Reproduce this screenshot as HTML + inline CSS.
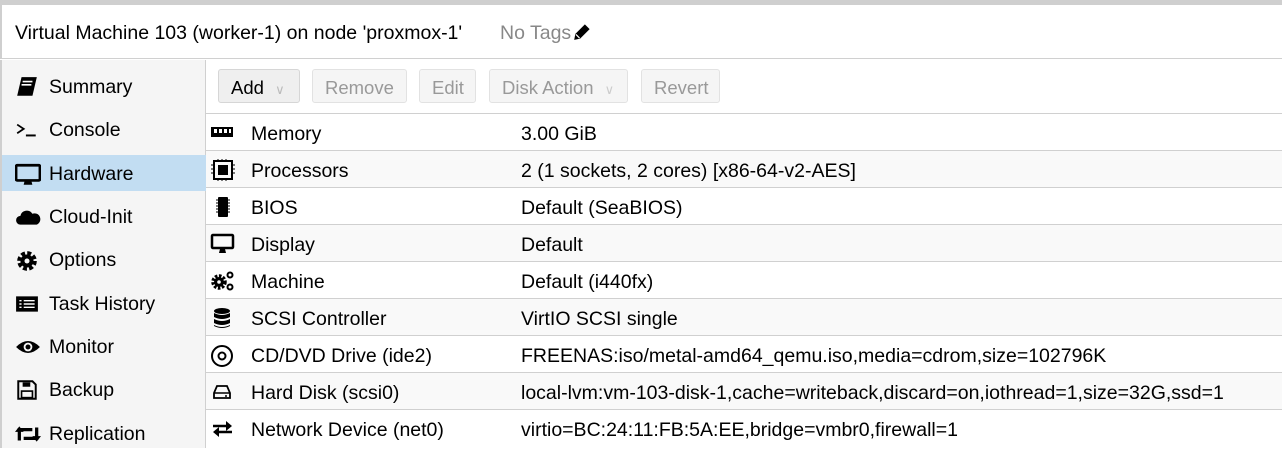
<!DOCTYPE html><html><head><style>
*{margin:0;padding:0;box-sizing:border-box}
body{width:1282px;height:448px;overflow:hidden;font-family:"Liberation Sans",sans-serif;background:#fff;position:relative;color:#000}
.top{position:absolute;left:0;top:0;width:1282px;height:5px;background:#cfcfcf}
.hdr{position:absolute;left:0;top:5px;width:1282px;height:54px;border-bottom:1px solid #d0d0d0;border-left:2px solid #cfcfcf}
.hdr .t{position:absolute;left:13px;top:17px;font-size:19.5px}
.hdr .g{position:absolute;left:498px;top:17px;font-size:19.5px;color:#888}
.side{position:absolute;left:0;top:60px;width:206px;height:388px;background:#f5f5f5;border-right:1px solid #d0d0d0;border-left:2px solid #cfcfcf}
.si{position:absolute;left:0;width:204px;height:36px;font-size:19.5px}
.si span{position:absolute;left:47px;top:8px}
.si svg{position:absolute;left:13px;top:8px}
.sel{background:#c2ddf2}
.btn{position:absolute;top:69px;height:34px;border:1px solid #e2e2e2;border-radius:3px;background:#f5f5f5;font-size:18.5px;color:#999;padding:7px 0 0 12px}
.btn.a{background:#efefef;border-color:#d6d6d6;color:#000}
.tb{position:absolute;left:206px;top:113px;width:1076px;border-top:1px solid #d0d0d0}
.row{position:relative;height:37px;border-bottom:1px solid #d0d0d0;font-size:19.5px}
.row.g{background:#f9f9f9}
.row .n{position:absolute;left:45px;top:9px}
.row .v{position:absolute;left:315px;top:9px}
.row svg{position:absolute;left:4px;top:8px}
</style></head><body>
<div class="top"></div>
<div class="hdr"><div class="t">Virtual Machine 103 (worker-1) on node 'proxmox-1'</div><div class="g">No Tags <svg width="19" height="19" viewBox="0 0 16 16" style="vertical-align:-2px;margin-left:-4px"><path d="M1 15l1-5 8-8 4 4-8 8z" fill="#000"/><path d="M2.5 10.5l3 3" stroke="#fff" stroke-width="1"/></svg></div></div>
<div class="side">
<div class="si" style="top:8px"><svg width="24" height="22" viewBox="0 0 22 20"><path d="M6 1h14l-4 17H2z" fill="#000"/><path d="M7 5h9M6 8h9" stroke="#fff" stroke-width="1.5"/></svg><span>Summary</span></div>
<div class="si" style="top:51px"><svg width="24" height="22" viewBox="0 0 22 20"><path d="M2 5l6 4-6 4" stroke="#000" stroke-width="1.6" fill="none"/><path d="M10 15h9" stroke="#000" stroke-width="1.8"/></svg><span>Console</span></div>
<div class="si sel" style="top:95px"><svg width="26" height="24" viewBox="0 0 24 22"><rect x="1" y="2" width="22" height="14" rx="1" fill="none" stroke="#000" stroke-width="2.5"/><path d="M8 20h8l-1-4H9z" fill="#000"/></svg><span>Hardware</span></div>
<div class="si" style="top:138px"><svg width="26" height="22" viewBox="0 0 24 20"><path d="M5 17a4 4 0 010-8 6 6 0 0111-2 5 5 0 014 10z" fill="#000"/></svg><span>Cloud-Init</span></div>
<div class="si" style="top:181px"><svg width="24" height="24" viewBox="0 0 22 22"><circle cx="11" cy="11" r="7" fill="none" stroke="#000" stroke-width="4" stroke-dasharray="3.5 2"/><circle cx="11" cy="11" r="6" fill="#000"/><circle cx="11" cy="11" r="2.3" fill="#f5f5f5"/></svg><span>Options</span></div>
<div class="si" style="top:225px"><svg width="24" height="22" viewBox="0 0 22 20"><rect x="1" y="3" width="20" height="14" fill="#000"/><path d="M4 7h2M8 7h10M4 10h2M8 10h10M4 13h2M8 13h10" stroke="#fff" stroke-width="1.3"/></svg><span>Task History</span></div>
<div class="si" style="top:268px"><svg width="26" height="22" viewBox="0 0 24 20"><path d="M1 10q11-11 22 0q-11 11-22 0z" fill="#000"/><circle cx="12" cy="10" r="4" fill="#f5f5f5"/><circle cx="12" cy="10" r="2.3" fill="#000"/></svg><span>Monitor</span></div>
<div class="si" style="top:311px"><svg width="24" height="22" viewBox="0 0 22 20"><path d="M3 2h13l3 3v13H3z" fill="none" stroke="#000" stroke-width="1.8"/><rect x="7" y="3" width="7" height="4" fill="#000"/><rect x="6" y="11" width="10" height="6" fill="none" stroke="#000" stroke-width="1.5"/></svg><span>Backup</span></div>
<div class="si" style="top:355px"><svg width="26" height="22" viewBox="0 0 24 20"><path d="M4 16V6h12" stroke="#000" stroke-width="3" fill="none"/><path d="M0 8l4-5 4 5z" fill="#000"/><path d="M20 4v10H8" stroke="#000" stroke-width="3" fill="none"/><path d="M16 12l4 5 4-5z" fill="#000"/></svg><span>Replication</span></div>
</div>
<div class="btn a" style="left:218px;width:82px">Add <span style="color:#bbb;font-size:13px;margin-left:6px">&#8744;</span></div>
<div class="btn" style="left:312px;width:95px">Remove</div>
<div class="btn" style="left:419px;width:57px">Edit</div>
<div class="btn" style="left:489px;width:139px">Disk Action <span style="color:#ccc;font-size:13px;margin-left:6px">&#8744;</span></div>
<div class="btn" style="left:641px;width:79px">Revert</div>
<div class="tb">
<div class="row"><svg width="26" height="20" viewBox="0 0 26 20"><rect x="1" y="5" width="22" height="10" fill="#000"/><rect x="4" y="7" width="3" height="4" fill="#fff"/><rect x="9" y="7" width="3" height="4" fill="#fff"/><rect x="14" y="7" width="3" height="4" fill="#fff"/><rect x="19" y="7" width="2" height="4" fill="#fff"/></svg><span class="n">Memory</span><span class="v">3.00 GiB</span></div>
<div class="row g"><svg width="26" height="22" viewBox="0 0 26 22"><rect x="4" y="2" width="18" height="18" fill="none" stroke="#000" stroke-width="2"/><rect x="8" y="6" width="10" height="10" fill="#000"/><path d="M1 6h3M1 10h3M1 14h3M22 6h3M22 10h3M22 14h3M8 0v2M12 0v2M16 0v2M8 20v2M12 20v2M16 20v2" stroke="#000"/></svg><span class="n">Processors</span><span class="v">2 (1 sockets, 2 cores) [x86-64-v2-AES]</span></div>
<div class="row"><svg width="26" height="22" viewBox="0 0 26 22"><rect x="8" y="1" width="10" height="20" rx="1" fill="#000"/><path d="M6 4h14M6 7h14M6 10h14M6 13h14M6 16h14" stroke="#000" stroke-dasharray="2 10"/></svg><span class="n">BIOS</span><span class="v">Default (SeaBIOS)</span></div>
<div class="row g"><svg width="26" height="22" viewBox="0 0 26 22"><rect x="2" y="2" width="21" height="13" rx="1" fill="none" stroke="#000" stroke-width="2.5"/><path d="M9 20h7l-1-4h-5z" fill="#000"/></svg><span class="n">Display</span><span class="v">Default</span></div>
<div class="row"><svg width="26" height="22" viewBox="0 0 26 22"><circle cx="9" cy="12" r="6" fill="none" stroke="#000" stroke-width="3.5" stroke-dasharray="2.5 1.5"/><circle cx="9" cy="12" r="5" fill="#000"/><circle cx="9" cy="12" r="1.8" fill="#fff"/><circle cx="20" cy="5" r="2.5" fill="none" stroke="#000" stroke-width="2"/><circle cx="20" cy="17" r="2.5" fill="none" stroke="#000" stroke-width="2"/></svg><span class="n">Machine</span><span class="v">Default (i440fx)</span></div>
<div class="row g"><svg width="26" height="22" viewBox="0 0 26 22"><ellipse cx="12" cy="4" rx="8" ry="3" fill="#000"/><path d="M4 6v4q8 4 16 0V6q-8 4-16 0zM4 12v4q8 4 16 0v-4q-8 4-16 0zM4 18v1q8 4 16 0v-1q-8 4-16 0z" fill="#000"/></svg><span class="n">SCSI Controller</span><span class="v">VirtIO SCSI single</span></div>
<div class="row"><svg width="26" height="24" viewBox="0 0 26 22"><circle cx="12" cy="11" r="10" fill="none" stroke="#000" stroke-width="2"/><circle cx="12" cy="11" r="3.5" fill="none" stroke="#000" stroke-width="2"/></svg><span class="n">CD/DVD Drive (ide2)</span><span class="v">FREENAS:iso/metal-amd64_qemu.iso,media=cdrom,size=102796K</span></div>
<div class="row g"><svg width="26" height="22" viewBox="0 0 26 22"><path d="M4 12l3-7h10l3 7v5H4z" fill="none" stroke="#000" stroke-width="1.8"/><path d="M4 12h16M15 15h2" stroke="#000" stroke-width="1.5"/></svg><span class="n">Hard Disk (scsi0)</span><span class="v">local-lvm:vm-103-disk-1,cache=writeback,discard=on,iothread=1,size=32G,ssd=1</span></div>
<div class="row" style="border-bottom:none"><svg width="26" height="22" viewBox="0 0 26 22"><path d="M3 8h17M5 14h17" stroke="#000" stroke-width="2.5"/><path d="M16 3l6 5-6 5zM9 9l-6 5 6 5z" fill="#000"/></svg><span class="n">Network Device (net0)</span><span class="v">virtio=BC:24:11:FB:5A:EE,bridge=vmbr0,firewall=1</span></div>
</div>
</body></html>
